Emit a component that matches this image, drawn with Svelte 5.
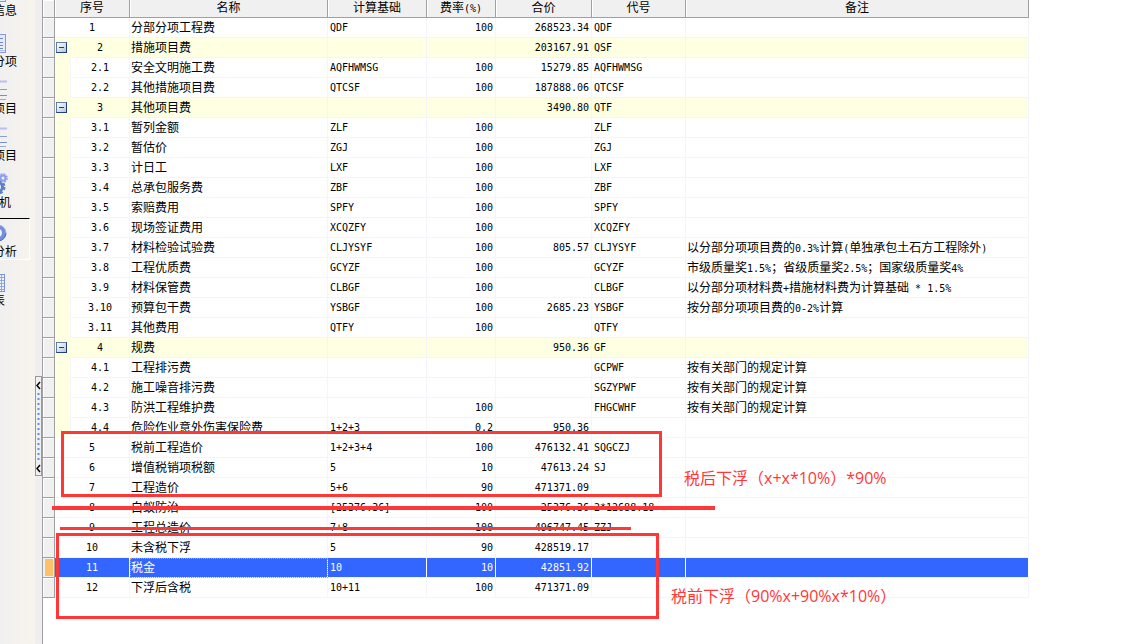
<script>
  const tools = [
    {label:'信息', icon:'sheet', end:12},
    {label:'分项', icon:'sheet', end:12},
    {label:'项目', icon:'lines', end:12},
    {label:'项目', icon:'lines', end:12},
    {label:'机', icon:'gears', end:18},
    {label:'分析', icon:'ring', end:12, active:true},
    {label:'表', icon:'report', end:24}
  ];

  // no, name, base, rate, total, code, note
  const rows = [
    ['1','分部分项工程费','QDF','100','268523.34','QDF',''],
    ['2','措施项目费','','','203167.91','QSF',''],
    ['2.1','安全文明施工费','AQFHWMSG','100','15279.85','AQFHWMSG',''],
    ['2.2','其他措施项目费','QTCSF','100','187888.06','QTCSF',''],
    ['3','其他项目费','','','3490.80','QTF',''],
    ['3.1','暂列金额','ZLF','100','','ZLF',''],
    ['3.2','暂估价','ZGJ','100','','ZGJ',''],
    ['3.3','计日工','LXF','100','','LXF',''],
    ['3.4','总承包服务费','ZBF','100','','ZBF',''],
    ['3.5','索赔费用','SPFY','100','','SPFY',''],
    ['3.6','现场签证费用','XCQZFY','100','','XCQZFY',''],
    ['3.7','材料检验试验费','CLJYSYF','100','805.57','CLJYSYF','以分部分项项目费的0.3%计算(单独承包土石方工程除外)'],
    ['3.8','工程优质费','GCYZF','100','','GCYZF','市级质量奖1.5%；省级质量奖2.5%；国家级质量奖4%'],
    ['3.9','材料保管费','CLBGF','100','','CLBGF','以分部分项材料费+措施材料费为计算基础 * 1.5%'],
    ['3.10','预算包干费','YSBGF','100','2685.23','YSBGF','按分部分项项目费的0-2%计算'],
    ['3.11','其他费用','QTFY','100','','QTFY',''],
    ['4','规费','','','950.36','GF',''],
    ['4.1','工程排污费','','','','GCPWF','按有关部门的规定计算'],
    ['4.2','施工噪音排污费','','','','SGZYPWF','按有关部门的规定计算'],
    ['4.3','防洪工程维护费','','100','','FHGCWHF','按有关部门的规定计算'],
    ['4.4','危险作业意外伤害保险费','1+2+3','0.2','950.36','',''],
    ['5','税前工程造价','1+2+3+4','100','476132.41','SQGCZJ',''],
    ['6','增值税销项税额','5','10','47613.24','SJ',''],
    ['7','工程造价','5+6','90','471371.09','',''],
    ['8','白蚁防治','[25376.36]','100','25376.36','2*12688.18',''],
    ['9','工程总造价','7+8','100','496747.45','ZZJ',''],
    ['10','未含税下浮','5','90','428519.17','',''],
    ['11','税金','10','10','42851.92','',''],
    ['12','下浮后含税','10+11','100','471371.09','','']
  ];
  const groups = ['2','3','4'];
  let selected = $state('11');

  // latin runs use the narrow mono face, everything else the CJK face
  function runs(text){
    return text.match(/[\x20-\x7e]+|[^\x20-\x7e]+/g) || [];
  }
</script>

{#snippet mixed(text)}
  {#each runs(text) as run}{#if run.charCodeAt(0) < 128}<span class="latin">{run}</span>{:else}{run}{/if}{/each}
{/snippet}

<div class="page">
  <nav>
    {#each tools as tool}
      <button class="tool" class:active={tool.active}>
        <svg width="24" height="24" viewBox="0 0 24 24">
          {#if tool.icon === 'sheet'}
            <rect x="4.5" y="5.5" width="17" height="18" fill="#e6eaff" stroke="#8b95e6"/>
            <path d="M7 9.500h12M7 13.500h12M7 16.500h12M7 19.500h12" stroke="#6d8bd0"/>
            <path d="M5 21.500h16" stroke="#b7c0f2"/>
          {:else if tool.icon === 'lines'}
            <path d="M3 5.500h20" stroke="#bcbcf4" stroke-width="2"/>
            <path d="M3 13.500h20" stroke="#8aa0dc"/>
            <path d="M3 19.500h20" stroke="#7890d0"/>
            <path d="M3 23.500h19" stroke="#9aa9cf"/>
          {:else if tool.icon === 'gears'}
            <circle cx="14" cy="17" r="4.500" fill="none" stroke="#5c80c8" stroke-width="3"/>
            <circle cx="14" cy="17" r="6.500" fill="none" stroke="#5c80c8" stroke-width="2" stroke-dasharray="3 2.100"/>
            <circle cx="19" cy="8" r="2.500" fill="none" stroke="#8e9df0" stroke-width="2"/>
            <circle cx="19" cy="8" r="4" fill="none" stroke="#8e9df0" stroke-width="1.500" stroke-dasharray="2 1.140"/>
          {:else if tool.icon === 'ring'}
            <circle cx="14" cy="14" r="6" fill="#eef2ff" stroke="#7290dc" stroke-width="4"/>
            <path d="M14 6a8 8 0 0 1 8 8" fill="none" stroke="#a5b4ee"/>
            <path d="M22 14a8 8 0 0 1-8 8" fill="none" stroke="#5069b8"/>
          {:else}
            <rect x="5.500" y="6.500" width="15" height="17" fill="#eef3ff" stroke="#7c93dc"/>
            <path d="M6 9.500h14M6 12.500h14M6 15.500h14M6 18.500h14M6 21.500h14M17.500 7v16" stroke="#8fa9e0"/>
          {/if}
        </svg>
        <span class="label" style="padding-right:{tool.end}px">{tool.label}</span>
      </button>
    {/each}
  </nav>

  <div class="splitter">
    <button class="grip" aria-label="collapse">
      <svg width="5" height="98" viewBox="0 0 5 98">
        <path d="M4 5L1 8.500L4 12M4 88L1 91.500L4 95" fill="none" stroke="#000" stroke-width="1.500"/>
        <path d="M2.500 16v67" stroke="#5b92dd" stroke-width="2" stroke-dasharray="2 3"/>
      </svg>
    </button>
  </div>

  <main>
    <table>
      <colgroup>
        <col class="w-mark"><col class="w-tree"><col class="w-no"><col class="w-name"><col class="w-base">
        <col class="w-rate"><col class="w-total"><col class="w-code"><col class="w-note">
      </colgroup>
      <thead>
        <tr>
          <td class="mark"></td>
          <th colspan="2">序号</th>
          <th>名称</th>
          <th>计算基础</th>
          <th>费率<span class="latin">(%)</span></th>
          <th>合价</th>
          <th>代号</th>
          <th>备注</th>
        </tr>
      </thead>
      <tbody>
        {#each rows as [no, name, base, rate, total, code, note]}
          {@const group = groups.includes(no)}
          {@const child = no.includes('.')}
          <tr class:group class:selected={selected === no} onclick={() => selected = no}>
            <td class="mark"></td>
            {#if group || child}
              <td class="tree">
                {#if group}<button class="toggle" aria-label="collapse {no}"></button>{/if}
              </td>
            {/if}
            <td class="no latin" colspan={group || child ? 1 : 2}>{no}</td>
            <td class="name">{name}</td>
            <td class="latin">{base}</td>
            <td class="num latin">{rate}</td>
            <td class="num latin">{total}</td>
            <td class="latin">{code}</td>
            <td class="note">{@render mixed(note)}</td>
          </tr>
        {/each}
      </tbody>
    </table>

    <div class="box box-after"></div>
    <div class="strike strike-8"></div>
    <div class="strike strike-9"></div>
    <div class="box box-before"></div>
    <p class="remark remark-after">税后下浮（x+x*10%）*90%</p>
    <p class="remark remark-before">税前下浮（90%x+90%x*10%）</p>
  </main>
</div>

<style>
  :global(body){
    background:#fff;
  }
  .page{
    display:flex;
    min-height:100vh;
    overflow:hidden;
    font:12px/19px "Noto Sans CJK SC", sans-serif;
    color:#000;
  }
  button{
    font:inherit;
    color:inherit;
    border:0;
    padding:0;
    background:none;
  }
  nav{
    flex:none;
    width:35px;
    overflow:hidden;
    background:linear-gradient(to right, #f0f0f0, #f7f4ed);
  }
  .tool{
    display:flex;
    flex-direction:column;
    align-items:flex-end;
    width:29px;
    padding-top:7px;
  }
  .tool:first-child{
    margin-top:-29px;
    margin-bottom:4px;
  }
  .tool svg{
    flex:none;
    margin-right:21px;
  }
  .label{
    line-height:16px;
    white-space:nowrap;
  }
  .tool.active{
    width:30px;
    margin-top:8px;
    padding-top:0;
    border-top:1px solid #000;
    border-right:1px solid #fff;
    border-bottom:1px solid #fff;
  }
  .tool.active + .tool{
    padding-top:8px;
  }
  .splitter{
    flex:none;
    width:7px;
    padding-top:376px;
    background:#efefef;
  }
  .grip{
    display:block;
    width:7px;
    height:100px;
    border:1px solid #999;
    background:#f0f0f0;
  }
  .grip svg{
    display:block;
  }
  main{
    position:relative;
    flex:1;
    min-width:0;
    border-left:1px solid #a0a0a0;
  }
  table{
    table-layout:fixed;
    width:986px;
    border-collapse:separate;
    border-spacing:0;
  }
  .w-mark{ width:12px; }
  .w-tree{ width:16px; }
  .w-no{ width:59px; }
  .w-name{ width:198px; }
  .w-base{ width:99px; }
  .w-rate{ width:69px; }
  .w-total{ width:96px; }
  .w-code{ width:94px; }
  .w-note{ width:343px; }
  th{
    height:14px;
    padding:0 0 3px;
    font-weight:normal;
    line-height:14px;
    background:#f0f0f0;
    border-right:1px solid #a0a0a0;
    border-bottom:1px solid #a0a0a0;
    box-shadow:inset 1px 0 #fff;
  }
  td{
    height:19px;
    padding:0 2px;
    line-height:19px;
    white-space:nowrap;
    border-right:1px solid #f3f5fb;
    border-bottom:1px solid #f3f5fb;
  }
  td.name, td.note{
    height:17px;
    padding:0 1px 2px;
    line-height:17px;
  }
  .latin{
    font-family:"DejaVu Sans Mono", monospace;
    font-size:10px;
  }
  span.latin{
    line-height:1;
    white-space:pre;
  }
  td.mark{
    padding:0;
    background:#f0f0f0;
    border-right:1px solid #a0a0a0;
    border-bottom:1px solid #a0a0a0;
    box-shadow:inset 1px 1px #fff;
  }
  thead td.mark{
    height:17px;
  }
  td.no{
    text-align:center;
  }
  td.num{
    text-align:right;
  }
  td.tree{
    padding:0 1px;
    background:#ffffe1;
    border-bottom-color:#ffffe1;
  }
  .group td:not(.mark){
    background:#ffffe1;
  }
  .group td.tree{
    border-right-color:#ffffe1;
  }
  .toggle{
    display:block;
    width:11px;
    height:11px;
    border:1px solid #5c7fb0;
    border-right-color:#1f3f78;
    border-bottom-color:#1f3f78;
    background:
      linear-gradient(#1d3f78, #1d3f78) center / 5px 1px no-repeat,
      linear-gradient(135deg, #fff, #b4c6de);
  }
  .selected td:not(.mark){
    color:#fff;
    background:#3366ff;
    border-right-color:#fff;
  }
  .selected td.mark{
    background:#ffc06c;
    box-shadow:inset 0 0 0 1px #f0f0f0, inset 2px 0 #f0f0f0;
  }
  .selected td.name{
    outline:1px dotted #e0a030;
    outline-offset:-1px;
  }

  /* red pen marks drawn over the sheet */
  .box{
    position:absolute;
    box-sizing:border-box;
    border:3px solid #ff3737;
    pointer-events:none;
  }
  .box-after{
    left:18px;
    top:431px;
    width:601px;
    height:66px;
  }
  .box-before{
    left:13px;
    top:533px;
    width:603px;
    height:86px;
  }
  .strike{
    position:absolute;
    background:#ff3737;
  }
  .strike-8{
    left:9px;
    top:506px;
    width:663px;
    height:4px;
  }
  .strike-9{
    left:17px;
    top:527px;
    width:571px;
    height:3px;
  }
  .remark{
    position:absolute;
    margin:0;
    font:16px/24px "Open Sans", "Noto Sans CJK SC", sans-serif;
    color:#ff3737;
    white-space:nowrap;
  }
  .remark-after{
    left:641px;
    top:466px;
  }
  .remark-before{
    left:628px;
    top:584px;
  }
</style>
